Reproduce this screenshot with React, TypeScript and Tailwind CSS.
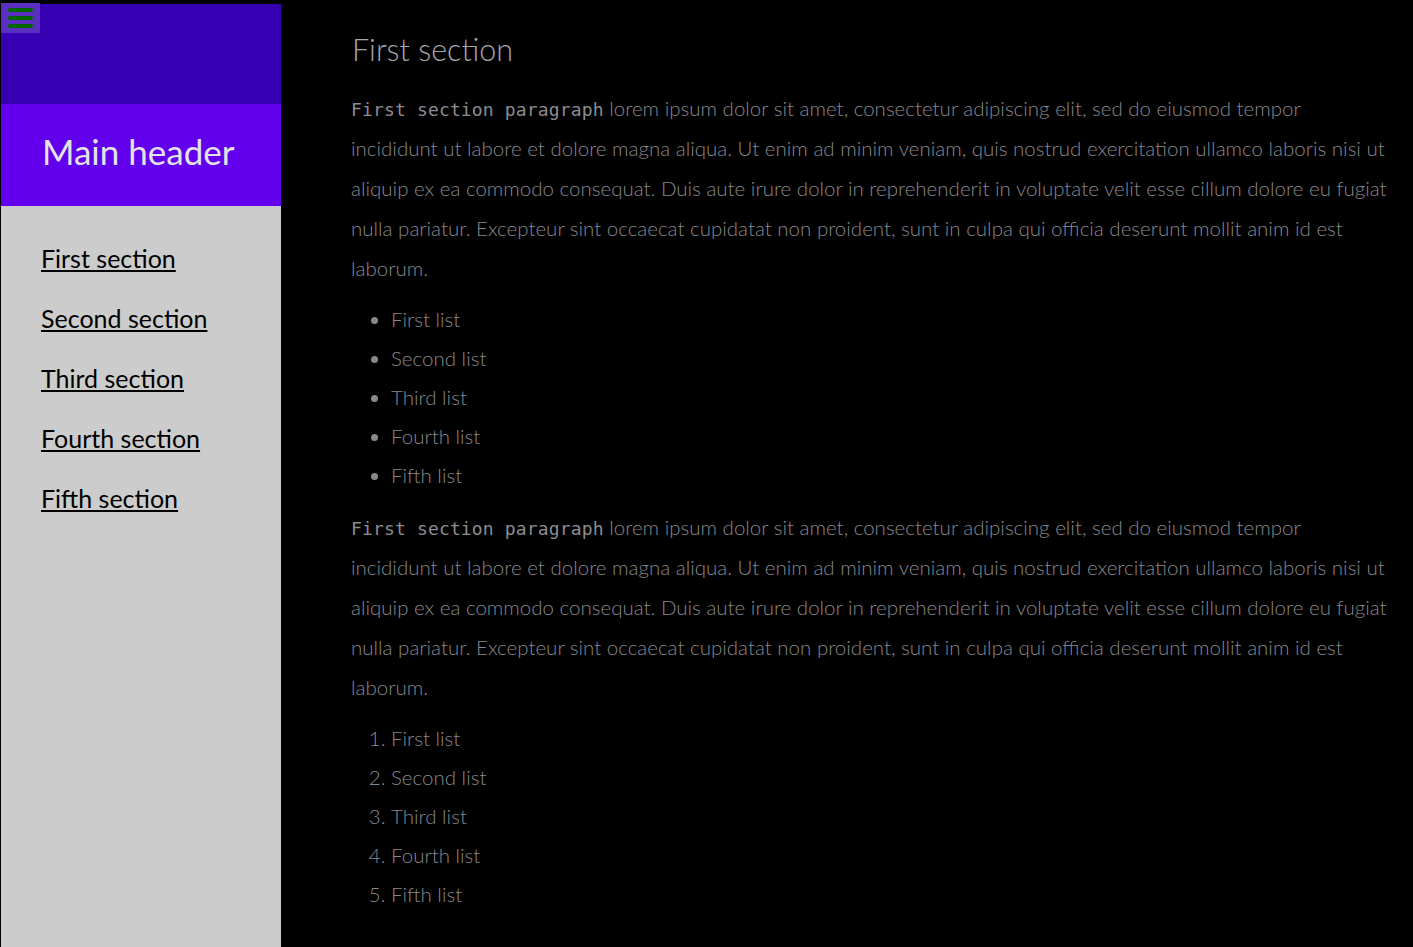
import React from "react";

const sections = ["First section", "Second section", "Third section", "Fourth section", "Fifth section"];
const items = ["First list", "Second list", "Third list", "Fourth list", "Fifth list"];

const Paragraph = () => (
  <p className="leading-[40px] my-0">
    <span className="font-['DejaVu_Sans_Mono',monospace] text-[18px] tracking-[0.15px] leading-none font-normal text-[#8c8c92]">
      First section paragraph
    </span>{" "}
    lorem ipsum dolor sit amet, consectetur adipiscing elit, sed do eiusmod tempor incididunt ut labore et dolore magna
    aliqua. Ut enim ad minim veniam, quis nostrud exercitation ullamco laboris nisi ut aliquip ex ea commodo consequat.
    Duis aute irure dolor in reprehenderit in voluptate velit esse cillum dolore eu fugiat nulla pariatur. Excepteur
    sint occaecat cupidatat non proident, sunt in culpa qui officia deserunt mollit anim id est laborum.
  </p>
);

const Sidebar = () => {
  return (
    <aside className="relative flex flex-col w-[280px] ml-[1px] h-screen shrink-0 bg-[#cccccc]">
      <div className="h-[4px] bg-black" />
      <button className="absolute top-[3px] left-0 w-[39px] h-[30px] bg-[#5b2ec2] flex flex-col justify-center items-center gap-[4px]">
        <span className="block w-[25px] h-[4px] rounded-full bg-[#006400]" />
        <span className="block w-[25px] h-[4px] rounded-full bg-[#006400]" />
        <span className="block w-[25px] h-[4px] rounded-full bg-[#006400]" />
      </button>
      <div className="h-[100px] bg-[#3700b3]" />
      <div className="h-[102px] bg-[#6200ee] flex items-center pl-[41px] pb-[8px]">
        <h1 className="text-[35px] text-[#e3e3e3] font-normal">Main header</h1>
      </div>
      <nav className="flex flex-col gap-[30px] pt-[37px] pl-[40px]">
        {sections.map((s) => (
          <a key={s} href="#" className="text-[25px] leading-[30px] text-black underline underline-offset-[2px]">
            {s}
          </a>
        ))}
      </nav>
    </aside>
  );
};

const App = () => {
  return (
    <div className="flex min-h-screen bg-black font-['Lato',sans-serif]">
      <Sidebar />
      <main className="flex-1 pl-[70px] pr-[23px] pt-[27px] text-[20.5px] font-light text-[#88888e]">
        <h2 className="text-[30.5px] leading-[44px] text-[#a6a6ae] mb-[17px] ml-[1px]">First section</h2>
        <Paragraph />
        <ul className="list-disc pl-[40px] my-[12px]">
          {items.map((i) => (
            <li key={i} className="leading-[39px]">
              {i}
            </li>
          ))}
        </ul>
        <Paragraph />
        <ol className="list-decimal pl-[40px] my-[12px]">
          {items.map((i) => (
            <li key={i} className="leading-[39px]">
              {i}
            </li>
          ))}
        </ol>
      </main>
    </div>
  );
};

export default App;
